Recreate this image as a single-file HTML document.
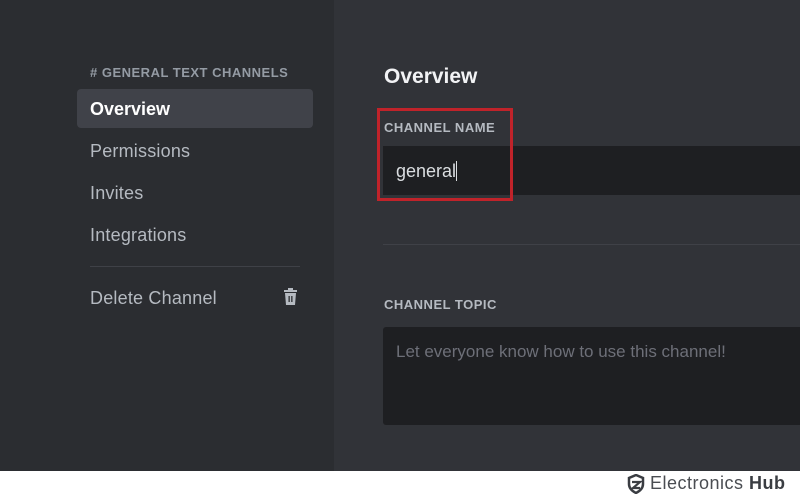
<!DOCTYPE html>
<html><head><style>
*{margin:0;padding:0;box-sizing:border-box}
body{width:800px;height:500px;background:#fff;font-family:"Liberation Sans",sans-serif;position:relative;overflow:hidden}
.side{position:absolute;left:0;top:0;width:334px;height:471px;background:#2b2d31}
.main{position:absolute;left:334px;top:0;width:466px;height:471px;background:#313338}
.a{position:absolute}
.hdr{left:90px;top:65px;font-size:13px;font-weight:bold;color:#949ba4;letter-spacing:.5px}
.item{left:90px;font-size:18px;color:#b5bac1;letter-spacing:.2px}
.sel{left:77px;top:89px;width:236px;height:39px;background:#404249;border-radius:4px}
.lbl{font-size:13px;font-weight:bold;color:#b5bac1;left:384px;letter-spacing:.5px}
</style></head><body>
<div class="side"></div><div class="main"></div>
<div class="a hdr"># GENERAL TEXT CHANNELS</div>
<div class="a sel"></div>
<div class="a item" style="top:99px;color:#fff;font-weight:bold;letter-spacing:0">Overview</div>
<div class="a item" style="top:141px">Permissions</div>
<div class="a item" style="top:183px">Invites</div>
<div class="a item" style="top:225px">Integrations</div>
<div class="a" style="left:90px;top:266px;width:210px;height:1px;background:#3f4147"></div>
<div class="a item" style="top:288px">Delete Channel</div>
<svg class="a" style="left:283px;top:288px" width="15" height="18" viewBox="0 0 15 18"><rect x="1" y="2" width="13" height="2" fill="#b5bac1"/><rect x="5" y="0" width="5" height="2" fill="#b5bac1"/><path d="M2 5h11l-1 12H3z" fill="#b5bac1"/><rect x="5.5" y="8" width="1.3" height="6" fill="#2b2d31"/><rect x="8.2" y="8" width="1.3" height="6" fill="#2b2d31"/></svg>
<div class="a" style="left:384px;top:65px;font-size:21px;font-weight:bold;color:#f2f3f5">Overview</div>
<div class="a lbl" style="top:120px">CHANNEL NAME</div>
<div class="a" style="left:383px;top:146px;width:417px;height:49px;background:#1e1f22"></div>
<div class="a" style="left:396px;top:161px;font-size:18px;color:#dbdee1">general<span style="display:inline-block;width:1px;height:20px;background:#dbdee1;vertical-align:-4px"></span></div>
<div class="a" style="left:377px;top:108px;width:136px;height:93px;border:3px solid #c0232a"></div>
<div class="a" style="left:383px;top:244px;width:417px;height:1px;background:#3f4147"></div>
<div class="a lbl" style="top:297px">CHANNEL TOPIC</div>
<div class="a" style="left:383px;top:327px;width:417px;height:98px;background:#1e1f22;border-radius:3px 0 0 3px"></div>
<div class="a" style="left:396px;top:342px;font-size:17px;color:#6d6f78">Let everyone know how to use this channel!</div>
<svg class="a" style="left:627px;top:474px" width="18" height="20" viewBox="0 0 18 20"><path d="M9 1L2 4v6c0 4 3 7 7 9 4-2 7-5 7-9V4z" fill="none" stroke="#3a3d42" stroke-width="2.5"/><path d="M5 8h8L6 14h7" fill="none" stroke="#3a3d42" stroke-width="2.2"/></svg>
<div class="a" style="left:650px;top:473px;font-size:18px;color:#4a4d52;letter-spacing:.5px">Electronics <b style="color:#3a3d42">Hub</b></div>
</body></html>
